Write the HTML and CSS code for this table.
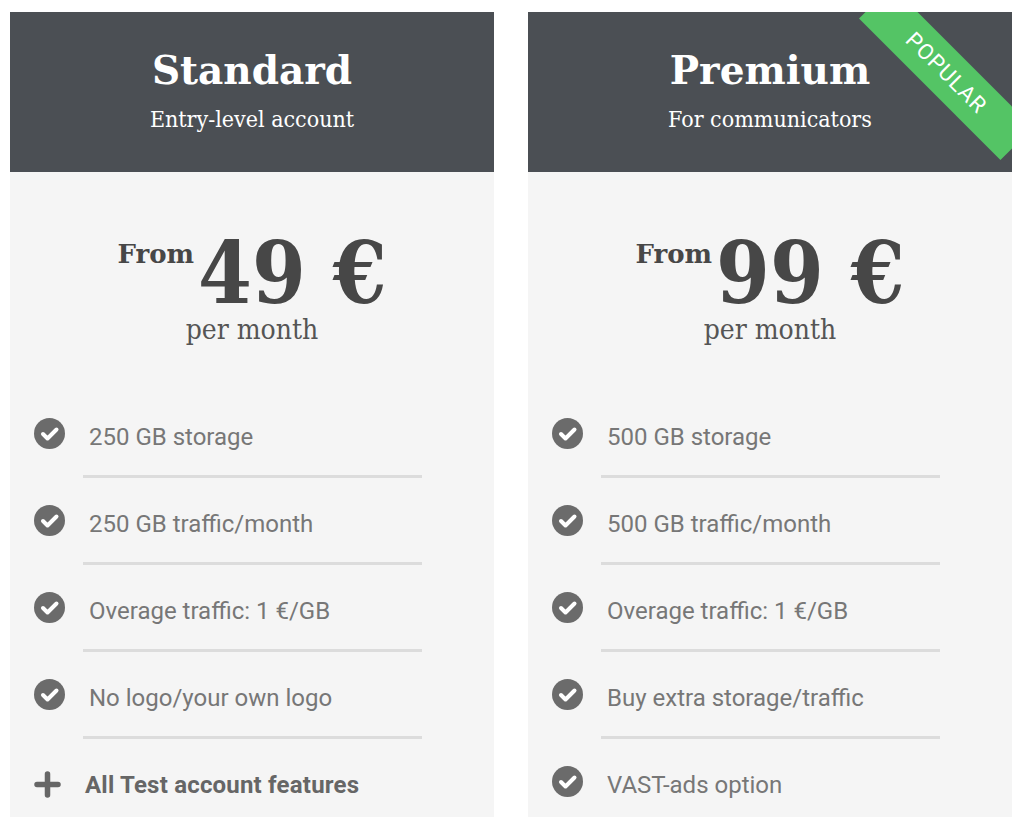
FILE: index.html
```html
<!DOCTYPE html>
<html lang="en">
<head>
<meta charset="utf-8">
<title>Pricing</title>
<link rel="stylesheet" href="styles.css">
</head>
<body>
<div class="plans">
  <section class="plan">
    <header class="plan-head">
      <h2 class="plan-title">Standard</h2>
      <p class="plan-sub">Entry-level account</p>
    </header>
    <div class="plan-body">
      <div class="price">
        <div class="price-row">
          <span class="price-from">From</span>
          <span class="price-num">49 €</span>
        </div>
        <div class="price-per">per month</div>
      </div>
      <ul class="features">
        <li class="feature"><svg class="ic" viewBox="0 0 31 31"><circle cx="15.5" cy="15.5" r="15.5" fill="#6b6b6b"/><path d="M9 16l4.5 4.5L22.5 11.5" fill="none" stroke="#fff" stroke-width="4" stroke-linecap="round" stroke-linejoin="round"/></svg><span class="ft">250 GB storage</span></li>
        <li class="feature"><svg class="ic" viewBox="0 0 31 31"><circle cx="15.5" cy="15.5" r="15.5" fill="#6b6b6b"/><path d="M9 16l4.5 4.5L22.5 11.5" fill="none" stroke="#fff" stroke-width="4" stroke-linecap="round" stroke-linejoin="round"/></svg><span class="ft">250 GB traffic/month</span></li>
        <li class="feature"><svg class="ic" viewBox="0 0 31 31"><circle cx="15.5" cy="15.5" r="15.5" fill="#6b6b6b"/><path d="M9 16l4.5 4.5L22.5 11.5" fill="none" stroke="#fff" stroke-width="4" stroke-linecap="round" stroke-linejoin="round"/></svg><span class="ft">Overage traffic: 1 €/GB</span></li>
        <li class="feature"><svg class="ic" viewBox="0 0 31 31"><circle cx="15.5" cy="15.5" r="15.5" fill="#6b6b6b"/><path d="M9 16l4.5 4.5L22.5 11.5" fill="none" stroke="#fff" stroke-width="4" stroke-linecap="round" stroke-linejoin="round"/></svg><span class="ft">No logo/your own logo</span></li>
        <li class="feature feature-plus"><svg class="ic ic-plus" viewBox="0 0 27 27"><path d="M13.5 3v21M3 13.5h21" fill="none" stroke="#666" stroke-width="5.5" stroke-linecap="round"/></svg><span class="ft">All Test account features</span></li>
      </ul>
    </div>
  </section>
  <section class="plan">
    <header class="plan-head">
      <h2 class="plan-title">Premium</h2>
      <p class="plan-sub">For communicators</p>
      <div class="ribbon">POPULAR</div>
    </header>
    <div class="plan-body">
      <div class="price">
        <div class="price-row">
          <span class="price-from">From</span>
          <span class="price-num">99 €</span>
        </div>
        <div class="price-per">per month</div>
      </div>
      <ul class="features">
        <li class="feature"><svg class="ic" viewBox="0 0 31 31"><circle cx="15.5" cy="15.5" r="15.5" fill="#6b6b6b"/><path d="M9 16l4.5 4.5L22.5 11.5" fill="none" stroke="#fff" stroke-width="4" stroke-linecap="round" stroke-linejoin="round"/></svg><span class="ft">500 GB storage</span></li>
        <li class="feature"><svg class="ic" viewBox="0 0 31 31"><circle cx="15.5" cy="15.5" r="15.5" fill="#6b6b6b"/><path d="M9 16l4.5 4.5L22.5 11.5" fill="none" stroke="#fff" stroke-width="4" stroke-linecap="round" stroke-linejoin="round"/></svg><span class="ft">500 GB traffic/month</span></li>
        <li class="feature"><svg class="ic" viewBox="0 0 31 31"><circle cx="15.5" cy="15.5" r="15.5" fill="#6b6b6b"/><path d="M9 16l4.5 4.5L22.5 11.5" fill="none" stroke="#fff" stroke-width="4" stroke-linecap="round" stroke-linejoin="round"/></svg><span class="ft">Overage traffic: 1 €/GB</span></li>
        <li class="feature"><svg class="ic" viewBox="0 0 31 31"><circle cx="15.5" cy="15.5" r="15.5" fill="#6b6b6b"/><path d="M9 16l4.5 4.5L22.5 11.5" fill="none" stroke="#fff" stroke-width="4" stroke-linecap="round" stroke-linejoin="round"/></svg><span class="ft">Buy extra storage/traffic</span></li>
        <li class="feature"><svg class="ic" viewBox="0 0 31 31"><circle cx="15.5" cy="15.5" r="15.5" fill="#6b6b6b"/><path d="M9 16l4.5 4.5L22.5 11.5" fill="none" stroke="#fff" stroke-width="4" stroke-linecap="round" stroke-linejoin="round"/></svg><span class="ft">VAST-ads option</span></li>
      </ul>
    </div>
  </section>
</div>
</body>
</html>
```
FILE: styles.css
```css
html, body {
  margin: 0;
  padding: 0;
  background: #ffffff;
}
body {
  padding: 12px 12px 0 10px;
  overflow: hidden;
  height: 817px;
  box-sizing: border-box;
}
.plans {
  display: flex;
  gap: 34px;
}
.plan {
  width: 484px;
  flex: none;
  background: #f5f5f5;
}
.plan-head {
  position: relative;
  overflow: hidden;
  height: 160px;
  box-sizing: border-box;
  padding-top: 35px;
  background: #4b4f54;
  color: #ffffff;
  text-align: center;
}
.plan-title {
  margin: 0;
  font-family: "DejaVu Serif", serif;
  font-weight: bold;
  font-size: 39px;
  line-height: 46px;
}
.plan-sub {
  margin: 11px 0 0;
  font-family: "DejaVu Serif Condensed", "DejaVu Serif", serif;
  font-weight: normal;
  font-size: 23px;
  line-height: 30px;
}
.ribbon {
  position: absolute;
  left: 318px;
  top: 38px;
  width: 200px;
  height: 46px;
  line-height: 46px;
  transform: rotate(45deg);
  background: #54c465;
  color: #ffffff;
  font-family: "Roboto", sans-serif;
  font-size: 22px;
  letter-spacing: 1px;
  text-align: center;
}
.plan-body {
  padding-bottom: 40px;
}
.price {
  display: flex;
  flex-direction: column;
  align-items: center;
  padding: 63px 0 44px;
  color: #474747;
}
.price-row {
  display: flex;
  align-items: flex-start;
  gap: 4px;
}
.price-from {
  margin-top: 6px;
  font-family: "DejaVu Serif", serif;
  font-weight: bold;
  font-size: 26px;
  line-height: 26px;
}
.price-num {
  font-family: "DejaVu Serif Condensed", "DejaVu Serif", serif;
  font-weight: bold;
  font-size: 86px;
  line-height: 76px;
}
.price-per {
  margin-top: 2px;
  font-family: "DejaVu Serif Condensed", "DejaVu Serif", serif;
  font-size: 28px;
  line-height: 34px;
  color: #555555;
}
.features {
  list-style: none;
  margin: 0;
  padding: 0 0 0 24px;
}
.feature {
  display: flex;
  align-items: flex-start;
  gap: 18px;
  padding-top: 31px;
}
.ic {
  flex: none;
  width: 31px;
  height: 31px;
  margin-top: -4px;
}
.ic-plus {
  width: 27px;
  height: 27px;
  margin: 1px 4px 0 0;
}
.ft {
  width: 339px;
  box-sizing: border-box;
  padding: 0 0 23px 6px;
  border-bottom: 3px solid #dcdcdc;
  font-family: "Roboto", sans-serif;
  font-size: 24px;
  line-height: 30px;
  color: #777777;
}
.feature-plus .ft {
  padding-left: 2px;
  font-weight: bold;
  letter-spacing: 0.2px;
  color: #666666;
}
```
